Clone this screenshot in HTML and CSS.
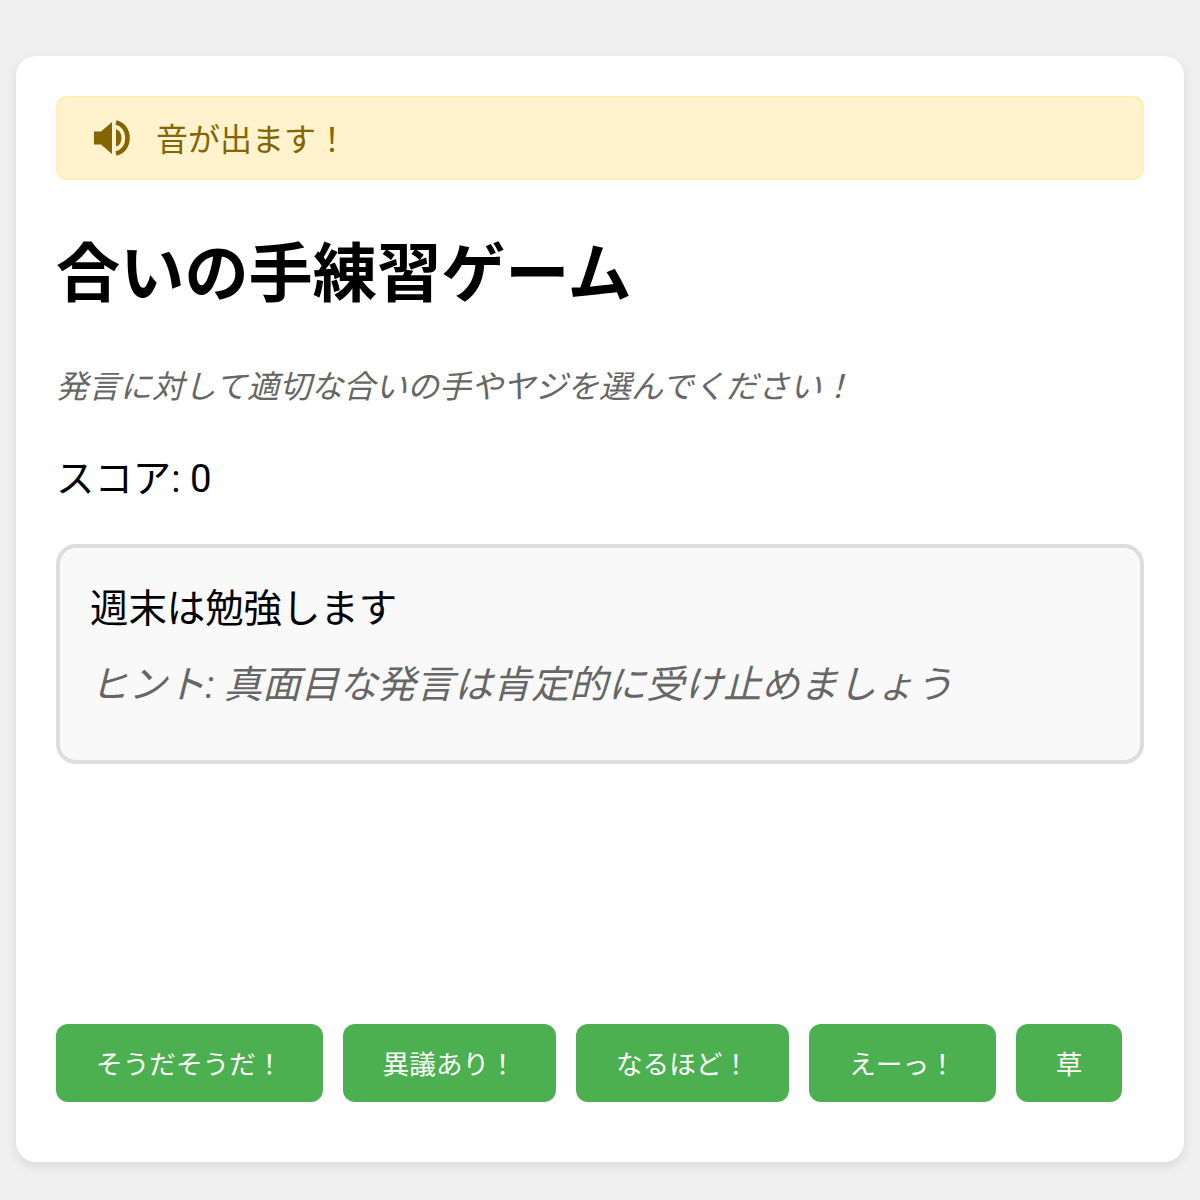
FILE: index.html
```html
<!DOCTYPE html>
<html lang="ja">
<head>
    <meta charset="UTF-8">
    <title>合いの手練習ゲーム</title>
    <link rel="stylesheet" href="styles.css">
</head>
<body>
    <div class="container">
        <div class="sound-notice">
            <svg class="sound-icon" width="37" height="36" viewBox="0 0 37 36">
                <path d="M0 11.500h7L18 2v32L7 24.500H0z" fill="currentColor"/>
                <path d="M22 9.500a5.500 8.500 0 0 1 0 17z" fill="currentColor"/>
                <path d="M22 2.500C29 4 33.500 10 33.500 18S29 32 22 33.500" fill="none" stroke="currentColor" stroke-width="4.500"/>
            </svg>
            <span class="sound-text">音が出ます！</span>
        </div>
        <h1>合いの手練習ゲーム</h1>
        <p class="intro">発言に対して適切な合いの手やヤジを選んでください！</p>
        <div class="score">スコア: 0</div>
        <div class="speech-box">
            <div class="speech">週末は勉強します</div>
            <div class="hint">ヒント: 真面目な発言は肯定的に受け止めましょう</div>
        </div>
        <div class="choices">
            <button>そうだそうだ！</button>
            <button>異議あり！</button>
            <button>なるほど！</button>
            <button>えーっ！</button>
            <button>草</button>
        </div>
    </div>
</body>
</html>
```

FILE: styles.css
```css
body {
    font-family: Roboto, "Noto Sans CJK JP", sans-serif;
    background-color: #f0f0f0;
    margin: 0;
    padding: 56px 16px 38px;
}

.container {
    background-color: #ffffff;
    border-radius: 20px;
    box-shadow: 0 4px 12px rgba(0, 0, 0, 0.1);
    padding: 40px;
    height: 1106px;
    box-sizing: border-box;
    display: flex;
    flex-direction: column;
}

.sound-notice {
    background-color: #fff3cd;
    border: 2px solid #ffeeba;
    border-radius: 10px;
    color: #856404;
    height: 84px;
    box-sizing: border-box;
    padding: 0 36px;
    display: flex;
    align-items: center;
    gap: 25px;
    font-size: 32px;
}

.sound-icon {
    flex: none;
}

.sound-text {
    padding-bottom: 2px;
}

h1 {
    font-size: 64.2px;
    line-height: 90px;
    margin: 49px 0 0;
    color: #000000;
}

.intro {
    font-size: 32px;
    font-style: italic;
    color: #666666;
    line-height: 44px;
    margin: 46px 0 0;
}

.score {
    font-size: 38.4px;
    line-height: 54px;
    margin: 43px 0 0;
}

.speech-box {
    background-color: #f9f9f9;
    border: 4px solid #dddddd;
    border-radius: 20px;
    height: 220px;
    box-sizing: border-box;
    margin-top: 38px;
    padding: 34px 30px;
}

.speech {
    font-size: 38.4px;
    line-height: 54px;
}

.hint {
    font-size: 38.4px;
    font-style: italic;
    color: #666666;
    line-height: 54px;
    margin-top: 22px;
}

.choices {
    display: flex;
    gap: 20px;
    margin-top: auto;
    padding-bottom: 20px;
}

.choices button {
    font-family: inherit;
    background-color: #4caf50;
    border: none;
    border-radius: 12px;
    color: #ffffff;
    font-size: 26.667px;
    height: 78px;
    padding: 0 40px 2px;
}
```
